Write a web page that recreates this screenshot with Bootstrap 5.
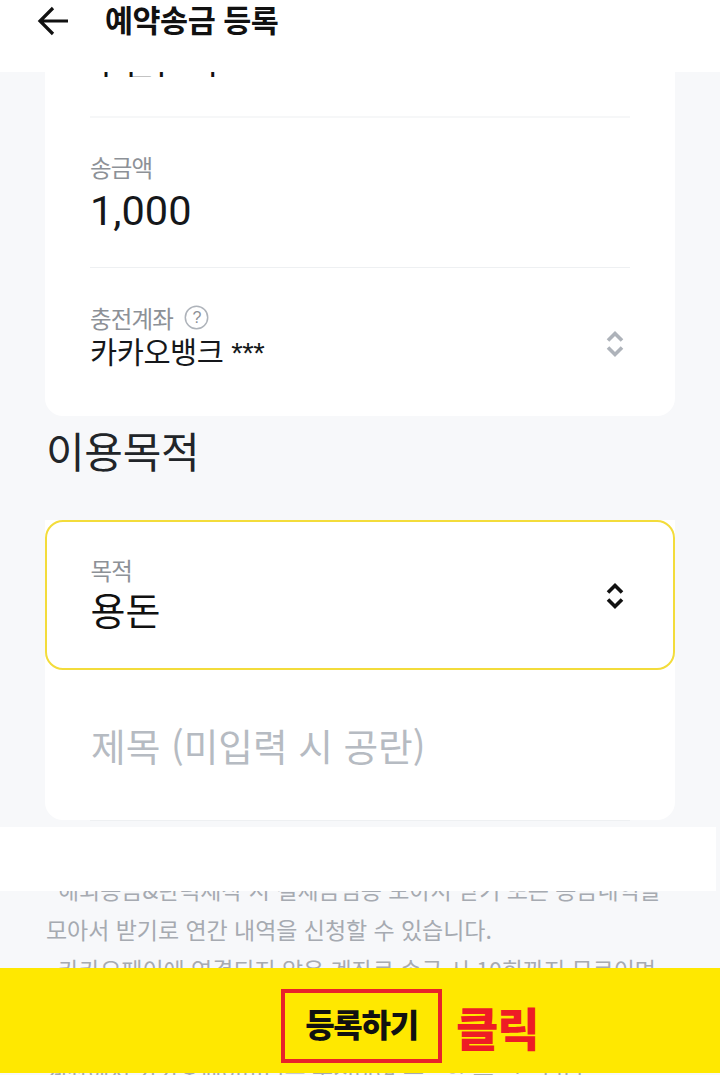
<!DOCTYPE html>
<html lang="ko">
<head>
<meta charset="utf-8">
<title>예약송금 등록</title>
<link href="https://cdn.jsdelivr.net/npm/bootstrap@5.3.0/dist/css/bootstrap.min.css" rel="stylesheet">
<style>
html,body{height:1075px;overflow:hidden;margin:0}
body{font-family:"Noto Sans CJK KR","Noto Sans",sans-serif;background:#f7f8fa;color:#111;position:relative;width:720px}
.app-head{height:72px;background:#fff;position:relative;z-index:3}
.app-head svg{margin-left:37px;margin-top:-30px}
.head-title{font-size:30.5px;font-weight:700;letter-spacing:-.5px;line-height:40px;margin-left:36px;margin-top:-34px;color:#111}
.scroll-area{height:1003px;overflow:hidden;background:#f7f8fa}
.white-card{margin:-30px 45px 0;background:#fff;border-radius:0 0 18px 18px;padding:0 45px}
.clip-row{height:76px;border-bottom:2px solid #f6f7f8;font-size:35px;line-height:40px}
.clip-row span{display:block;height:35px;overflow:hidden}
.amount-row{height:150px;border-bottom:1px solid #eef0f2;padding-top:33px}
.lbl{font-size:23.5px;line-height:32px;color:#8d9197;letter-spacing:-.9px}
.amt{font-family:Roboto,sans-serif;font-size:41.5px;line-height:52px;color:#15171a;margin-top:2px}
.acct-row{height:148px;padding-top:34px;position:relative}
.acct-val{font-size:29.5px;line-height:32px;letter-spacing:-.45px;color:#15171a}
.acct-val b{font-family:"Liberation Sans",sans-serif;font-weight:400}
.help-dot{margin-left:11px;margin-top:-2px}
.updown{position:absolute;right:6px}
.acct-row .updown{top:62px}
.sect-head{font-size:42px;font-weight:400;line-height:56px;margin:6px 0 42px 46px;letter-spacing:-.3px;color:#212529}
.purpose-wrap{margin:0 45px;background:#fff;border-radius:0 0 18px 18px;height:300px;position:relative}
.purpose-wrap::after{content:"";position:absolute;left:45px;right:45px;bottom:-1px;border-bottom:1px solid #eef0f2}
.purpose-box{height:150px;border:2.5px solid #f3dc3b;border-radius:18px;background:#fff;padding:32px 43.5px 0;position:relative}
.purpose-box .updown{right:49px;top:60px}
.purpose-val{font-size:38px;line-height:46px;color:#111}
.title-ph{font-size:37.7px;line-height:50px;color:#b6bbc2;padding:50px 0 0 46px}
.notes{margin:0;padding:49px 46px 0;font-size:23px;line-height:40px;color:#a6aab1;letter-spacing:-.05px;list-style:none}
.notes li{white-space:nowrap}
.notes .ind{padding-left:12px}
.notes .gap-line{margin-top:22px}
.strip{position:absolute;left:0;top:827px;width:716px;height:64px;background:#fff;z-index:2}
.cta-bar{position:absolute;left:0;right:0;top:968px;height:105px;background:#ffe800;z-index:2}
.cta-box{width:161px;height:74px;border:4px solid #e8232a;margin:21px 0 0 281px;padding-bottom:6px;font-size:32px;font-weight:900;color:#111;letter-spacing:-1.3px;line-height:1}
.cta-note{font-size:46px;font-weight:900;color:#ee1c25;line-height:74px;margin:21px 0 0 14px;letter-spacing:-1px}
</style>
</head>
<body>
<header class="app-head d-flex align-items-center">
  <svg width="32" height="30" viewBox="0 0 32 30" fill="none" stroke="#111" stroke-width="3.2"><path d="M31 15H3M16 2 3 15l13 13"/></svg>
  <div class="head-title">예약송금 등록</div>
</header>
<main class="scroll-area">
  <div class="white-card">
    <div class="clip-row"><span>주민은비</span></div>
    <div class="amount-row">
      <div class="lbl">송금액</div>
      <div class="amt">1,000</div>
    </div>
    <div class="acct-row">
      <div class="lbl d-flex align-items-center">충전계좌
        <svg class="help-dot" width="25" height="25" viewBox="0 0 25 25" fill="none"><circle cx="12.5" cy="12.5" r="11.2" stroke="#aeb3ba" stroke-width="1.5"/><text x="12.5" y="18" text-anchor="middle" font-size="16" fill="#8d9197" font-family="Liberation Sans">?</text></svg>
      </div>
      <div class="acct-val">카카오뱅크 <b>***</b></div>
      <svg class="updown" width="18" height="28" viewBox="0 0 18 28" fill="none" stroke="#aeb3ba" stroke-width="3.6"><path d="M2 10.5 9 3.5l7 7M2 17.5l7 7 7-7"/></svg>
    </div>
  </div>
  <h2 class="sect-head">이용목적</h2>
  <div class="purpose-wrap">
    <div class="purpose-box">
      <div class="lbl">목적</div>
      <div class="purpose-val">용돈</div>
      <svg class="updown" width="18" height="28" viewBox="0 0 18 28" fill="none" stroke="#111" stroke-width="3.6"><path d="M2 10.5 9 3.5l7 7M2 17.5l7 7 7-7"/></svg>
    </div>
    <div class="title-ph">제목 (미입력 시 공란)</div>
  </div>
  <ul class="notes">
    <li class="ind">해외송금&amp;탄력제작 시 결제금임봉 모아서 받기 또는 송금내역을</li>
    <li>모아서 받기로 연간 내역을 신청할 수 있습니다.</li>
    <li class="ind">카카오페이에 연결되지 않은 계좌로 송금 시 10회까지 무료이며</li>
    <li>&nbsp;</li>
    <li class="gap-line">계좌에서 카카오페이머니를 충전하여 송금할 수 있습니다.</li>
  </ul>
</main>
<div class="strip"></div>
<div class="cta-bar d-flex align-items-start">
  <div class="cta-box d-flex align-items-center justify-content-center">등록하기</div>
  <div class="cta-note">클릭</div>
</div>
<script src="https://cdn.jsdelivr.net/npm/bootstrap@5.3.0/dist/js/bootstrap.bundle.min.js"></script>
</body>
</html>
